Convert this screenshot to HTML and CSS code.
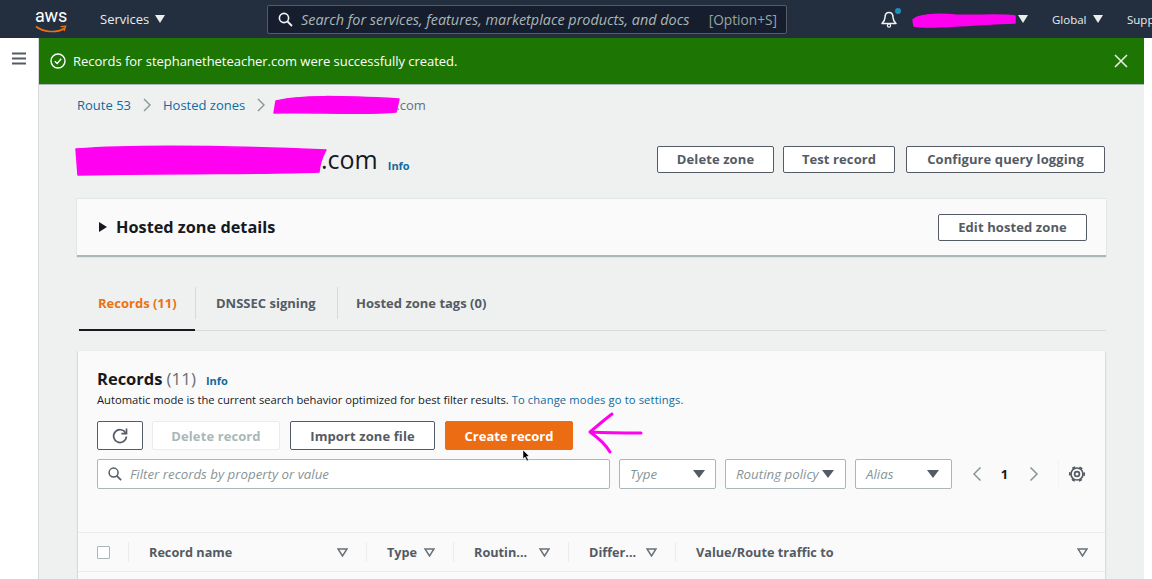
FILE: index.html
```html
<!DOCTYPE html>
<html lang="en">
<head>
<meta charset="utf-8">
<title>Route 53 hosted zone</title>
<link rel="stylesheet" href="styles.css">
</head>
<body>
<div class="page">
  <header class="topbar">
    <div class="logo">
      <span class="logo-text">aws</span>
      <svg class="logo-smile" width="32" height="9" viewBox="0 0 32 9"><path d="M1 1.5C8 7 21 8.5 29 3.5" fill="none" stroke="#ec7211" stroke-width="1.6"/><path d="M25.5 1.6L30.6 1.2 29 6" fill="none" stroke="#ec7211" stroke-width="1.4"/></svg>
    </div>
    <span class="top-link services">Services</span>
    <span class="caret caret-services"></span>
    <div class="search">
      <svg width="15" height="15" viewBox="0 0 15 15"><circle cx="6" cy="6" r="4.6" fill="none" stroke="#f2f3f3" stroke-width="1.6"/><path d="M9.5 9.5L14 14" stroke="#f2f3f3" stroke-width="1.8"/></svg>
      <span class="search-text">Search for services, features, marketplace products, and docs</span>
      <span class="search-key">[Option+S]</span>
    </div>
    <div class="bell">
      <svg width="18" height="18" viewBox="0 0 18 18"><path d="M9 2.5C6 2.500 5 5 5 7.500C5 10 4 11.500 2 13.500H16C14 11.500 13 10 13 7.500C13 5 12 2.500 9 2.500Z" fill="none" stroke="#f2f3f3" stroke-width="1.5" stroke-linejoin="round"/><circle cx="9" cy="15.500" r="1.6" fill="none" stroke="#f2f3f3" stroke-width="1.2"/></svg>
      <span class="bell-dot"></span>
    </div>
    <span class="caret caret-account"></span>
    <span class="top-link small region">Global</span>
    <span class="caret caret-region"></span>
    <span class="top-link small support">Supp</span>
  </header>

  <div class="shell">
    <aside class="sidenav">
      <svg class="menu-icon" width="14" height="13" viewBox="0 0 14 13"><path d="M0 1.5H14M0 6.5H14M0 11.5H14" stroke="#545b64" stroke-width="2"/></svg>
    </aside>
    <main class="main">
      <div class="flash">
        <svg class="flash-icon" width="16" height="16" viewBox="0 0 16 16"><circle cx="8" cy="8" r="7" fill="none" stroke="#fff" stroke-width="1.4"/><path d="M4.8 8.200L7.200 10.500L11.200 5.800" fill="none" stroke="#fff" stroke-width="1.4"/></svg>
        <span class="flash-text">Records for stephanetheteacher.com were successfully created.</span>
        <svg class="flash-close" width="14" height="14" viewBox="0 0 14 14"><path d="M1 1L13 13M13 1L1 13" stroke="#e9f0e4" stroke-width="1.6"/></svg>
      </div>

      <div class="content">
        <nav class="crumbs">
          <a class="link">Route 53</a>
          <svg class="chev" width="10" height="14" viewBox="0 0 10 14"><path d="M2 1L8 7L2 13" fill="none" stroke="#879596" stroke-width="1.4"/></svg>
          <a class="link">Hosted zones</a>
          <svg class="chev" width="10" height="14" viewBox="0 0 10 14"><path d="M2 1L8 7L2 13" fill="none" stroke="#879596" stroke-width="1.4"/></svg>
          <span class="crumb-current">.com</span>
        </nav>

        <div class="title-row">
          <h1 class="zone-title">.com</h1>
          <a class="info info-title">Info</a>
          <div class="title-actions">
            <button class="btn btn-zone">Delete zone</button>
            <button class="btn btn-test">Test record</button>
            <button class="btn btn-logging">Configure query logging</button>
          </div>
        </div>

        <section class="details">
          <span class="tri"></span>
          <h2 class="details-title">Hosted zone details</h2>
          <button class="btn btn-edit">Edit hosted zone</button>
        </section>

        <div class="tabs">
          <span class="tab tab-active">Records (11)</span>
          <span class="tab tab-dns">DNSSEC signing</span>
          <span class="tab tab-tags">Hosted zone tags (0)</span>
        </div>

        <section class="card">
          <div class="card-head">
            <div class="card-title"><strong>Records</strong> <span class="count">(11)</span><a class="info info-card">Info</a></div>
            <p class="card-desc">Automatic mode is the current search behavior optimized for best filter results. <a class="link desc-link">To change modes go to settings.</a></p>
            <div class="actions">
              <button class="btn btn-refresh"><svg width="18" height="18" viewBox="0 0 18 18"><path d="M14.600 6A6.400 6.400 0 1 0 15.400 9.500" fill="none" stroke="#545b64" stroke-width="1.7"/><path d="M15.500 1.500V6.600H10.400" fill="none" stroke="#545b64" stroke-width="1.7"/></svg></button>
              <button class="btn btn-disabled">Delete record</button>
              <button class="btn btn-import">Import zone file</button>
              <button class="btn btn-primary">Create record</button>
            </div>
            <div class="filters">
              <div class="filter-input">
                <svg width="14" height="14" viewBox="0 0 15 15"><circle cx="6" cy="6" r="4.800" fill="none" stroke="#545b64" stroke-width="1.6"/><path d="M9.500 9.500L14 14" stroke="#545b64" stroke-width="1.8"/></svg>
                <span class="placeholder">Filter records by property or value</span>
              </div>
              <div class="select sel-type"><span class="placeholder">Type</span><span class="sel-caret"></span></div>
              <div class="select sel-routing"><span class="placeholder">Routing policy</span><span class="sel-caret"></span></div>
              <div class="select sel-alias"><span class="placeholder">Alias</span><span class="sel-caret"></span></div>
              <div class="pager">
                <svg width="10" height="16" viewBox="0 0 10 16"><path d="M8.500 1.500L2 8L8.500 14.500" fill="none" stroke="#879596" stroke-width="1.5"/></svg>
                <span class="page-num">1</span>
                <svg width="10" height="16" viewBox="0 0 10 16"><path d="M1.500 1.500L8 8L1.500 14.500" fill="none" stroke="#879596" stroke-width="1.5"/></svg>
              </div>
              <div class="gear">
                <svg width="18" height="18" viewBox="0 0 18 18"><circle cx="9" cy="9" r="6" fill="none" stroke="#545b64" stroke-width="1.7"/><circle cx="9" cy="9" r="7.200" fill="none" stroke="#545b64" stroke-width="1.800" stroke-dasharray="3.200 4.340" transform="rotate(-12 9 9)"/><circle cx="9" cy="9" r="2.400" fill="none" stroke="#545b64" stroke-width="1.7"/></svg>
              </div>
            </div>
          </div>

          <div class="table-head">
            <div class="th th-check"><span class="checkbox"></span></div>
            <div class="th"><span>Record name</span><svg class="sort" width="11" height="9" viewBox="0 0 11 9"><path d="M1 1H10L5.500 8Z" fill="none" stroke="#687078" stroke-width="1.5"/></svg></div>
            <div class="th"><span>Type</span><svg class="sort" width="11" height="9" viewBox="0 0 11 9"><path d="M1 1H10L5.500 8Z" fill="none" stroke="#687078" stroke-width="1.5"/></svg></div>
            <div class="th"><span>Routin...</span><svg class="sort" width="11" height="9" viewBox="0 0 11 9"><path d="M1 1H10L5.500 8Z" fill="none" stroke="#687078" stroke-width="1.5"/></svg></div>
            <div class="th"><span>Differ...</span><svg class="sort" width="11" height="9" viewBox="0 0 11 9"><path d="M1 1H10L5.500 8Z" fill="none" stroke="#687078" stroke-width="1.5"/></svg></div>
            <div class="th th-last"><span>Value/Route traffic to</span><svg class="sort" width="11" height="9" viewBox="0 0 11 9"><path d="M1 1H10L5.500 8Z" fill="none" stroke="#687078" stroke-width="1.5"/></svg></div>
          </div>
        </section>
      </div>
    </main>
    <div class="gutter"></div>
  </div>

  <svg class="annotations" width="1152" height="579" viewBox="0 0 1152 579">
    <path d="M913 20C916 15 935 13 955 15C975 16 1000 14 1015 16L1015 23C990 23 975 26 955 26C940 27 925 28 914 26Z" fill="#ff00f0" stroke="#ff00f0" stroke-width="1.5" stroke-linejoin="round"/>
    <path d="M276 101C300 95 340 96 399 99L396 112C370 115 310 112 274 113Z" fill="#ff00f0" stroke="#ff00f0" stroke-width="1.5" stroke-linejoin="round"/>
    <path d="M76 149C130 145 230 146 326 150C323 156 320 160 319 172C270 174 200 173 78 175Z" fill="#ff00f0" stroke="#ff00f0" stroke-width="1.5" stroke-linejoin="round"/>
    <path d="M612 414C604 420 596 427 590 432C597 437 605 443 610 452M590 432C610 433 625 433 641 433" fill="none" stroke="#ff00f0" stroke-width="3" stroke-linecap="round" stroke-linejoin="round"/>
    <path d="M523 450V459L525 457L527 461L528.500 460L526.500 456.500L529 456Z" fill="#000" stroke="#fff" stroke-width=".5"/>
  </svg>
</div>
</body>
</html>
```

FILE: styles.css
```css
* { box-sizing: border-box; }
html, body { margin: 0; padding: 0; }
body { font-family: "Open Sans", "Noto Sans", Arial, sans-serif; background: #fff; color: #16191f; }
.page { position: relative; width: 1152px; height: 579px; overflow: hidden; }

/* top bar */
.topbar { height: 38px; background: #232f3e; display: flex; align-items: center; color: #f2f3f3; white-space: nowrap; overflow: hidden; }
.topbar > * { flex: none; }
.logo { width: 32px; margin-left: 35px; display: flex; flex-direction: column; align-items: center; height: 30px; }
.logo-text { font-family: Roboto, sans-serif; font-size: 18px; line-height: 20px; color: #fff; margin-top: 2px; letter-spacing: -.2px; }
.logo-smile { margin-top: -1px; }
.top-link { font-size: 13px; color: #eaeded; }
.services { margin-left: 33px; width: 50px; }
.small { font-size: 11.500px; }
.caret { width: 0; height: 0; border-left: 5.500px solid transparent; border-right: 5.500px solid transparent; border-top: 8px solid #eaeded; }
.caret-services { margin-left: 5px; }
.search { width: 520px; height: 29px; margin-left: 102px; background: #161e2d; border: 1px solid #545b64; border-radius: 2px; display: flex; align-items: center; padding: 0 9px 0 10px; }
.search-text { font-style: italic; font-size: 14.400px; color: #aab7b8; margin-left: 8px; flex: 1; white-space: nowrap; }
.search-key { font-size: 13.700px; color: #95a5a6; }
.bell { position: relative; width: 18px; height: 18px; margin-left: 93px; }
.bell-dot { position: absolute; top: -2px; right: -3px; width: 6px; height: 6px; border-radius: 50%; background: #1f8ebe; }
.caret-account { margin-left: 120px; border-left-width: 5px; border-right-width: 5px; border-top-width: 8px; }
.region { margin-left: 24px; width: 41px; }
.caret-region { margin-left: 0; border-left-width: 5px; border-right-width: 5px; border-top-width: 8px; }
.support { margin-left: 24px; }

/* shell */
.shell { display: flex; height: 541px; }
.sidenav { width: 39px; flex: none; background: #fff; padding: 14px 0 0 12px; border-right: 1px solid #d5dbdb; }
.menu-icon { display: block; }
.main { width: 1105px; flex: none; background: #eff1f1; }
.gutter { flex: 1; background: #fff; }
.flash { height: 47px; background: #1d7603; border-bottom: 1px solid #aab7b8; display: flex; align-items: center; padding: 0 16px 0 11px; color: #fff; }
.flash-text { font-size: 13px; margin-left: 7px; flex: 1; letter-spacing: -.03px; }

/* content */
.content { padding: 0 38px 0 38px; }
.link { color: #0f6a9e; }
.crumbs { height: 38px; display: flex; align-items: center; font-size: 13px; padding-top: 2px; }
.chev { margin: 0 11px 0 11px; }
.crumb-current { color: #687078; margin-left: 119px; font-size: 13px; }
.title-row { height: 42px; margin-top: 15px; display: flex; align-items: center; padding-right: 1px; }
.zone-title { margin: 0 0 0 244px; font-size: 25px; font-weight: 400; color: #16191f; line-height: 30px; }
.info { color: #0f6a9e; font-weight: 700; font-size: 11px; }
.info-title { margin: 13px 0 0 10px; }
.title-actions { margin-left: auto; display: flex; gap: 9px; }
.btn { height: 27px; border: 1px solid #545b64; border-radius: 2px; background: #fff; font-family: inherit; font-size: 13px; letter-spacing: .1px; font-weight: 700; color: #545b64; padding: 0; display: flex; align-items: center; justify-content: center; white-space: nowrap; }
.btn-zone { width: 117px; }
.btn-test { width: 112px; margin-right: 2px; }
.btn-logging { width: 199px; }

.details { height: 58px; margin-top: 19px; background: #fafafa; border-bottom: 2px solid #aab7b8; box-shadow: 0 0 1px rgba(0,28,36,.3); display: flex; align-items: center; padding: 0 19px 0 22px; width: 1029px; }
.tri { width: 0; height: 0; border-top: 5px solid transparent; border-bottom: 5px solid transparent; border-left: 8px solid #16191f; }
.details-title { margin: 0 0 0 9px; font-size: 16.300px; font-weight: 700; flex: 1; color: #16191f; }
.btn-edit { width: 149px; }

.tabs { height: 58px; margin-top: 16px; display: flex; align-items: center; border-bottom: 1px solid #d5dbdb; position: relative; margin-left: 2px; width: 1027px; }
.tab { height: 32px; display: flex; align-items: center; font-size: 13px; font-weight: 700; color: #545b64; padding-left: 20px; margin-top: 2px; white-space: nowrap; }
.tab-active { color: #ec7211; width: 116px; padding-left: 19px; }
.tab-dns { width: 142px; border-left: 1px solid #d5dbdb; }
.tab-tags { border-left: 1px solid #d5dbdb; padding-left: 18px; }
.tab-active::after { content: ""; position: absolute; left: 0; bottom: -1px; width: 116px; height: 2px; background: #16191f; }

.card { margin-top: 20px; margin-left: 1px; width: 1027px; height: 300px; background: #fafafa; box-shadow: 0 1px 2px rgba(0,28,36,.3); }
.card-head { padding: 18px 19px 0 19px; height: 182px; border-bottom: 1px solid #eaeded; }
.card-title { font-size: 16.500px; line-height: 19px; display: flex; align-items: baseline; }
.card-title strong { font-weight: 700; }
.count { color: #687078; margin-left: 4px; font-size: 17px; }
.info-card { margin-left: 10px; }
.card-desc { margin: 0; font-size: 11.200px; line-height: 20px; color: #16191f; white-space: nowrap; }
.desc-link { letter-spacing: .13px; }
.actions { display: flex; margin-top: 11px; height: 29px; }
.actions .btn { height: 29px; }
.btn-refresh { width: 46px; }
.btn-disabled { width: 128px; margin-left: 9px; border-color: #eaeded; color: #aab7b8; }
.btn-import { width: 145px; margin-left: 10px; }
.btn-primary { width: 128px; margin-left: 10px; background: #ec6c13; border-color: #ec6c13; color: #fff; letter-spacing: 0; }
.filters { display: flex; align-items: center; margin-top: 9px; height: 30px; }
.filter-input { width: 513px; height: 30px; background: #fff; border: 1px solid #aab7b8; border-radius: 2px; display: flex; align-items: center; padding-left: 10px; }
.placeholder { font-style: italic; font-size: 13.300px; color: #879596; white-space: nowrap; }
.filter-input .placeholder { margin-left: 8px; }
.select { height: 30px; margin-left: 9px; background: #fff; border: 1px solid #aab7b8; border-radius: 2px; display: flex; align-items: center; justify-content: space-between; padding: 0 10px; }
.sel-type { width: 97px; }
.sel-routing { width: 121px; padding-right: 11px; }
.sel-alias { width: 97px; padding-right: 12px; }
.sel-caret { width: 0; height: 0; border-left: 6px solid transparent; border-right: 6px solid transparent; border-top: 8px solid #545b64; flex: none; }
.pager { display: flex; align-items: center; margin-left: 20px; width: 87px; height: 28px; border-right: 1px solid #f2f3f3; }
.page-num { font-size: 13px; font-weight: 700; width: 47px; padding-right: 2px; text-align: center; }
.gear { margin-left: 9px; display: flex; }

.table-head { display: grid; grid-template-columns: 50px 238px 87px 115px 107px 415px; height: 39px; border-bottom: 1px solid #eaeded; align-items: center; }
.th { height: 20px; display: flex; align-items: center; justify-content: space-between; padding: 0 18px 0 20px; font-size: 12.700px; font-weight: 700; color: #545b64; border-left: 1px solid #eaeded; white-space: nowrap; }
.th-check { border-left: 0; padding: 0 0 0 19px; }
.th-last { padding-right: 2px; }
.checkbox { width: 13px; height: 13px; background: #fff; border: 1px solid #aab7b8; border-radius: 1px; }

.annotations { position: absolute; left: 0; top: 0; pointer-events: none; }
```
